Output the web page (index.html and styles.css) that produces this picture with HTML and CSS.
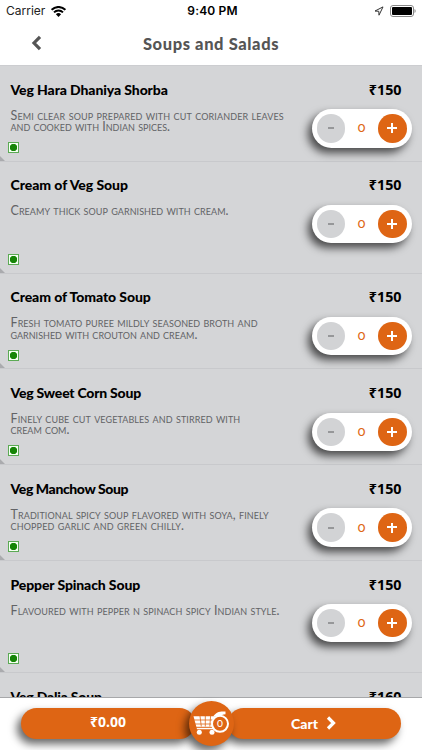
FILE: index.html
```html
<!DOCTYPE html>
<html lang="en">
<head>
<meta charset="utf-8">
<title>Soups and Salads</title>
<link rel="stylesheet" href="styles.css">
</head>
<body>
<div class="app">
  <div class="status">
    <div class="carrier">Carrier
      <svg width="15" height="11" viewBox="0 0 15 11"><path d="M.6 3.8a9.8 9.8 0 0 1 13.8 0M3 6.4a6.4 6.4 0 0 1 9 0" fill="none" stroke="#000" stroke-width="2"/><path d="M4.9 8.2a3.7 3.7 0 0 1 5.2 0L7.5 10.9z"/></svg>
    </div>
    <div class="time">9:40 PM</div>
    <div class="indicators">
      <svg width="10" height="10" viewBox="0 0 10 10"><path d="M9 .9 1 5l3.8.3.2 3.9z" fill="none" stroke="#333" stroke-width="1"/></svg>
      <svg width="26" height="12" viewBox="0 0 26 12"><rect x=".5" y=".5" width="23" height="11" rx="2.5" fill="#fff" stroke="#888"/><rect x="2" y="2" width="20" height="8" rx="1"/><path d="M24.5 4v4q1.2-.6 1.2-2t-1.2-2" fill="#888"/></svg>
    </div>
  </div>
  <header class="nav">
    <svg class="back" width="11" height="16" viewBox="0 0 11 16"><path d="M9 1.8 3 8l6 6.2" fill="none" stroke="#555" stroke-width="3.2"/></svg>
    <h1>Soups and Salads</h1>
  </header>
  <main class="menu">
    <article class="dish">
      <div class="info"><h2 class="t1">Veg Hara Dhaniya Shorba</h2><p><span class="a1">Semi clear soup prepared with cut coriander leaves</span><br><span>and cooked with Indian spices.</span></p><i class="veg"></i></div>
      <div class="side"><b>₹150</b><div class="stepper"><span class="btn minus"></span><span class="qty">0</span><span class="btn plus"></span></div></div>
    </article>
    <article class="dish tall">
      <div class="info"><h2 class="t2">Cream of Veg Soup</h2><p><span class="a2">Creamy thick soup garnished with cream.</span></p><i class="veg"></i></div>
      <div class="side"><b>₹150</b><div class="stepper"><span class="btn minus"></span><span class="qty">0</span><span class="btn plus"></span></div></div>
    </article>
    <article class="dish">
      <div class="info"><h2 class="t3">Cream of Tomato Soup</h2><p><span class="a3">Fresh tomato puree mildly seasoned broth and</span><br><span>garnished with crouton and cream.</span></p><i class="veg"></i></div>
      <div class="side"><b>₹150</b><div class="stepper"><span class="btn minus"></span><span class="qty">0</span><span class="btn plus"></span></div></div>
    </article>
    <article class="dish">
      <div class="info"><h2 class="t4">Veg Sweet Corn Soup</h2><p><span class="a4">Finely cube cut vegetables and stirred with</span><br><span>cream com.</span></p><i class="veg"></i></div>
      <div class="side"><b>₹150</b><div class="stepper"><span class="btn minus"></span><span class="qty">0</span><span class="btn plus"></span></div></div>
    </article>
    <article class="dish">
      <div class="info"><h2 class="t5">Veg Manchow Soup</h2><p><span class="a5">Traditional spicy soup flavored with soya, finely</span><br><span class="b5">chopped garlic and green chilly.</span></p><i class="veg"></i></div>
      <div class="side"><b>₹150</b><div class="stepper"><span class="btn minus"></span><span class="qty">0</span><span class="btn plus"></span></div></div>
    </article>
    <article class="dish tall">
      <div class="info"><h2 class="t6">Pepper Spinach Soup</h2><p><span class="a6">Flavoured with pepper n spinach spicy Indian style.</span></p><i class="veg"></i></div>
      <div class="side"><b>₹150</b><div class="stepper"><span class="btn minus"></span><span class="qty">0</span><span class="btn plus"></span></div></div>
    </article>
    <article class="dish">
      <div class="info"><h2 class="t7">Veg Dalia Soup</h2></div>
      <div class="side"><b>₹160</b></div>
    </article>
  </main>
  <footer class="bar">
    <div class="pill total">₹0.00</div>
    <div class="pill cart">Cart<svg width="10" height="14" viewBox="0 0 10 14"><path d="m2 1.5 5.5 5.5L2 12.5" fill="none" stroke="#fff" stroke-width="3.2"/></svg></div>
    <div class="badge">
      <svg width="37" height="26" viewBox="0 0 37 26">
        <path d="M.5 6.2h22l-1.8 13H4z" fill="#fff"/>
        <path d="M1 10h21M2 14h20M7 6l1.3 10.5M12.3 6v10.5M17.6 6l-.8 10.5" stroke="#de6514" stroke-width=".8"/>
        <path d="M3 17.3h18" stroke="#de6514" stroke-width="1"/>
        <circle cx="6.3" cy="22.3" r="2.5" fill="#fff"/><circle cx="19" cy="22.3" r="2.5" fill="#fff"/>
        <circle cx="27" cy="13.8" r="8" fill="#de6514" stroke="#fff" stroke-width="2"/>
        <path d="M20.2 6.6C23.2 1.8 27.5 1 32.5 1.6v2.6c-3 .4-4 1.2-5.5 2.1z" fill="#fff"/>
      </svg>
      <span class="count">0</span>
    </div>
  </footer>
</div>
</body>
</html>
```
FILE: styles.css
```css
* { box-sizing: border-box; }
body { margin: 0; font-family: Lato, "Noto Sans", sans-serif; background: #fff; }
.app { width: 422px; height: 750px; overflow: hidden; display: flex; flex-direction: column; }
svg { display: block; flex: none; }
.status { height: 22px; flex: none; padding: 0 6px; display: grid; grid-template-columns: 1fr auto 1fr; align-items: center; font: 12px/22px Inter, sans-serif; color: #000; }
.carrier { display: flex; align-items: center; gap: 6px; color: #222; }
.time { font-weight: 600; letter-spacing: .15px; margin-left: 3px; }
.indicators { display: flex; justify-content: flex-end; align-items: center; gap: 6px; }
.nav { height: 43px; flex: none; display: grid; grid-template-columns: 60px 1fr 60px; align-items: center; }
.back { margin-left: 31px; margin-top: -2px; }
.nav h1 { margin: 0; text-align: center; font-size: 16.5px; font-weight: 900; color: #555; letter-spacing: .6px; line-height: 44px; }
.menu { flex: 1; min-height: 0; overflow: hidden; background: #d4d5d7; border-top: 1px solid #cccdd0; }
.dish { height: 95.7px; display: flex; justify-content: space-between; padding: 12.8px 10.5px 0; border-bottom: 1px solid #c8c9cc; background: linear-gradient(45deg, #aaabae 0 3px, transparent 4px); }
.dish.tall { height: 112px; }
.info { display: flex; flex-direction: column; align-items: flex-start; white-space: nowrap; }
.info h2 { margin: 0; font-size: 14px; line-height: 22px; font-weight: 900; color: #000; }
.info p { margin: 9px 0 0; font-size: 12.5px; line-height: 11.3px; font-variant: small-caps; color: #626366; }
.t1 { letter-spacing: -.1px; }
.t2 { letter-spacing: -.05px; }
.t3 { letter-spacing: -.08px; }
.t4 { letter-spacing: -.22px; }
.t5 { letter-spacing: -.4px; }
.t6 { letter-spacing: -.12px; }
.t7 { letter-spacing: -.2px; }
.a1 { letter-spacing: .12px; }
.a2, .a3 { letter-spacing: .06px; }
.a4, .a5, .a6 { letter-spacing: .09px; }
.b5 { letter-spacing: .15px; }
.veg { margin: auto 0 7.6px -2.5px; width: 11px; height: 11px; border: 1px solid #5caa55; background: radial-gradient(circle, #168507 0 3.4px, #f4fff2 4px); }
.side { width: 100px; display: flex; flex-direction: column; align-items: flex-end; }
.side b { font: 700 14.3px/22px "Noto Sans", sans-serif; margin-right: 10px; color: #000; }
.stepper { margin-top: 8.4px; width: 100px; height: 38.5px; border-radius: 20px; background: #fff; box-shadow: -4px 5px 8px rgba(0,0,0,.65); display: flex; align-items: center; justify-content: space-between; padding: 0 5px; color: #de6514; }
.btn { width: 28.5px; height: 28.5px; border-radius: 50%; }
.minus { background: linear-gradient(#969799, #969799) center / 6px 2px no-repeat #d2d3d5; }
.plus { background: linear-gradient(#fff, #fff) center / 10px 2.4px no-repeat, linear-gradient(#fff, #fff) center / 2.4px 10px no-repeat, #de6514; }
.qty { font: 14px/20px Lato, sans-serif; font-variant-numeric: oldstyle-nums; margin-top: -2px; }
.bar { height: 53px; flex: none; background: #fff; border-top: 1px solid #a7a8aa; display: flex; align-items: flex-start; padding: 10px 21px 0; position: relative; }
.pill { height: 30.5px; border-radius: 15.5px; background: #de6514; box-shadow: -4px 5px 8px rgba(0,0,0,.6); color: #fff; font-weight: 900; font-size: 14px; display: flex; align-items: center; justify-content: center; }
.total { width: 174px; font-family: "Noto Sans", sans-serif; font-weight: 700; padding-bottom: 3px; }
.cart { width: 173px; margin-left: 33px; gap: 8px; padding-right: 2px; }
.badge { position: absolute; left: 189px; top: 2.5px; width: 45px; height: 45px; border-radius: 50%; background: #de6514; box-shadow: -4px 5px 8px rgba(0,0,0,.6); display: flex; align-items: center; justify-content: center; }
.count { position: absolute; left: 23px; width: 16px; top: 14px; text-align: center; font-size: 11px; line-height: 15px; font-variant-numeric: oldstyle-nums; color: #fff; }
```
